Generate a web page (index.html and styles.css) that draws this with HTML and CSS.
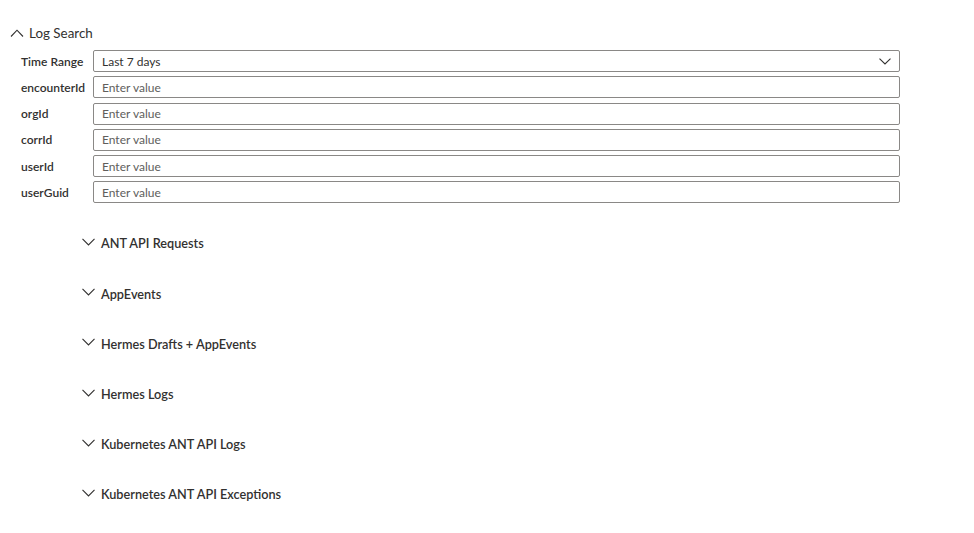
FILE: index.html
```html
<!DOCTYPE html>
<html>
<head>
<meta charset="utf-8">
<link rel="stylesheet" href="styles.css">
</head>
<body>
<div class="page">
  <div class="header">
    <svg class="chev" width="14" height="8" viewBox="0 0 14 8"><path d="M1 7.5 L7 1.2 L13 7.5" fill="none" stroke="#323130" stroke-width="1.1"/></svg>
    <span class="title">Log Search</span>
  </div>
  <div class="form">
    <label class="lbl">Time Range</label>
    <div class="field select"><span class="val">Last 7 days</span>
      <svg width="12" height="7" viewBox="0 0 12 7"><path d="M0.5 0.6 L6 6 L11.5 0.6" fill="none" stroke="#323130" stroke-width="1.1"/></svg>
    </div>
    <label class="lbl">encounterId</label>
    <div class="field"><span class="ph">Enter value</span></div>
    <label class="lbl">orgId</label>
    <div class="field"><span class="ph">Enter value</span></div>
    <label class="lbl">corrId</label>
    <div class="field"><span class="ph">Enter value</span></div>
    <label class="lbl">userId</label>
    <div class="field"><span class="ph">Enter value</span></div>
    <label class="lbl">userGuid</label>
    <div class="field"><span class="ph">Enter value</span></div>
  </div>
  <div class="sections">
    <div class="sec"><svg width="13" height="8" viewBox="0 0 13 8"><path d="M0.5 0.8 L6.5 7 L12.5 0.8" fill="none" stroke="#323130" stroke-width="1.1"/></svg><span>ANT API Requests</span></div>
    <div class="sec"><svg width="13" height="8" viewBox="0 0 13 8"><path d="M0.5 0.8 L6.5 7 L12.5 0.8" fill="none" stroke="#323130" stroke-width="1.1"/></svg><span>AppEvents</span></div>
    <div class="sec"><svg width="13" height="8" viewBox="0 0 13 8"><path d="M0.5 0.8 L6.5 7 L12.5 0.8" fill="none" stroke="#323130" stroke-width="1.1"/></svg><span>Hermes Drafts + AppEvents</span></div>
    <div class="sec"><svg width="13" height="8" viewBox="0 0 13 8"><path d="M0.5 0.8 L6.5 7 L12.5 0.8" fill="none" stroke="#323130" stroke-width="1.1"/></svg><span>Hermes Logs</span></div>
    <div class="sec"><svg width="13" height="8" viewBox="0 0 13 8"><path d="M0.5 0.8 L6.5 7 L12.5 0.8" fill="none" stroke="#323130" stroke-width="1.1"/></svg><span>Kubernetes ANT API Logs</span></div>
    <div class="sec"><svg width="13" height="8" viewBox="0 0 13 8"><path d="M0.5 0.8 L6.5 7 L12.5 0.8" fill="none" stroke="#323130" stroke-width="1.1"/></svg><span>Kubernetes ANT API Exceptions</span></div>
  </div>
</div>
</body>
</html>
```
FILE: styles.css
```css
html, body { margin: 0; padding: 0; background: #ffffff; }
body { font-family: "Lato", "Open Sans", sans-serif; color: #323130; }
.page { padding: 24px 0 0 0; width: 974px; }
.header { display: flex; align-items: center; height: 18px; padding-left: 10px; gap: 5px; }
.chev { display: block; }
.title { font-size: 13.4px; }
.form {
  display: grid;
  grid-template-columns: 72px 807px;
  row-gap: 4.3px;
  padding-left: 21px;
  margin-top: 8px;
  align-items: center;
}
.lbl { font-size: 12px; font-weight: 600; color: #323130; }
.field {
  box-sizing: border-box;
  height: 22px;
  border: 1px solid #8a8886;
  border-radius: 2px;
  display: flex;
  align-items: center;
  padding: 0 8px;
  font-size: 12px;
}
.field.select { justify-content: space-between; padding-right: 8px; }
.val { color: #323130; }
.ph { color: #605e5c; }
.sections { padding-left: 82px; margin-top: 31px; display: flex; flex-direction: column; gap: 32.2px; }
.sec { display: flex; align-items: center; gap: 6px; height: 18px; font-size: 12.7px; font-weight: 600; }
.sec svg { display: block; margin-top: -3px; }
```
